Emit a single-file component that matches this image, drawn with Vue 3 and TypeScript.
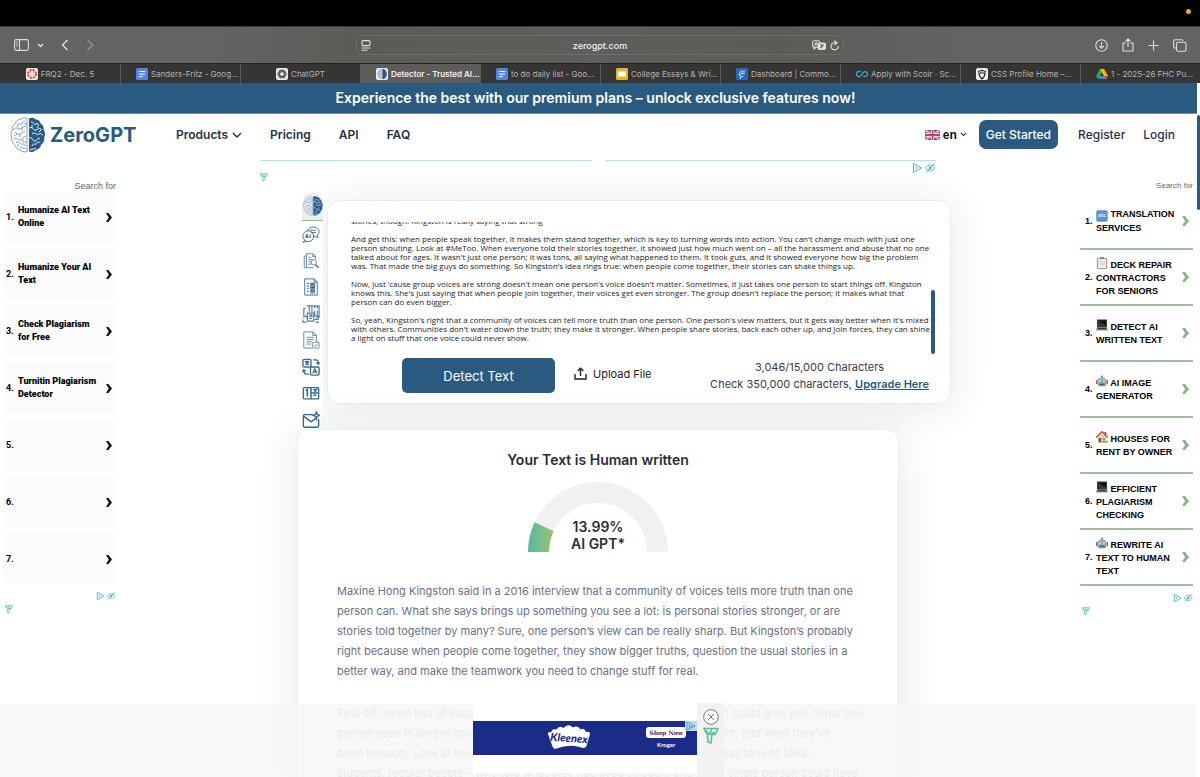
<script setup lang="ts">
import { onMounted, ref } from 'vue'

interface Tab { title: string; icon: string; cut?: boolean; active?: boolean }
const tabs: Tab[] = [
  { title: 'FRQ2 - Dec. 5', icon: 'canvas' },
  { title: 'Sanders-Fritz - Goog...', icon: 'docs', cut: true },
  { title: 'ChatGPT', icon: 'chatgpt' },
  { title: 'Detector - Trusted AI...', icon: 'zero', cut: true, active: true },
  { title: 'to do daily list - Goo...', icon: 'docs', cut: true },
  { title: 'College Essays & Wri...', icon: 'slides', cut: true },
  { title: 'Dashboard | Commo...', icon: 'common', cut: true },
  { title: 'Apply with Scoir · Sc...', icon: 'scoir', cut: true },
  { title: 'CSS Profile Home –...', icon: 'css', cut: true },
  { title: '1 - 2025-26 FHC Pu...', icon: 'drive', cut: true },
]

const leftAds: string[] = [
  'Humanize AI Text Online', 'Humanize Your AI Text', 'Check Plagiarism for Free',
  'Turnitin Plagiarism Detector', '', '', '',
]

const rightAds: { icon: string; text: string }[] = [
  { icon: 'abc', text: 'Translation Services' },
  { icon: 'clip', text: 'Deck Repair Contractors for Seniors' },
  { icon: 'laptop', text: 'Detect AI Written Text' },
  { icon: 'robot', text: 'AI Image Generator' },
  { icon: 'house', text: 'Houses for Rent by Owner' },
  { icon: 'laptop', text: 'Efficient Plagiarism Checking' },
  { icon: 'robot', text: 'Rewrite AI Text to Human Text' },
]

const tools: { icon: string; label: string }[] = [
  { icon: 'chat', label: 'AI chat' },
  { icon: 'plag', label: 'Plagiarism checker' },
  { icon: 'summary', label: 'Summarizer' },
  { icon: 'para', label: 'Paraphraser' },
  { icon: 'grammar', label: 'Grammar checker' },
  { icon: 'translate', label: 'Translator' },
  { icon: 'count', label: 'Word counter' },
  { icon: 'mail', label: 'Email helper' },
]

const essay = ref(`stories, though. Kingston is really saying that strong

And get this: when people speak together, it makes them stand together, which is key to turning words into action. You can't change much with just one
person shouting. Look at #MeToo. When everyone told their stories together, it showed just how much went on – all the harassment and abuse that no one
talked about for ages. It wasn't just one person; it was tons, all saying what happened to them. It took guts, and it showed everyone how big the problem
was. That made the big guys do something. So Kingston’s idea rings true: when people come together, their stories can shake things up.

Now, just ’cause group voices are strong doesn't mean one person's voice doesn't matter. Sometimes, it just takes one person to start things off. Kingston
knows this. She's just saying that when people join together, their voices get even stronger. The group doesn't replace the person; it makes what that
person can do even bigger.

So, yeah, Kingston's right that a community of voices can tell more truth than one person. One person's view matters, but it gets way better when it's mixed
with others. Communities don't water down the truth; they make it stronger. When people share stories, back each other up, and join forces, they can shine
a light on stuff that one voice could never show.`)

const box = ref<HTMLTextAreaElement | null>(null)
onMounted(() => {
  if (box.value) box.value.scrollTop = box.value.scrollHeight
})

const score = 13.99
const angle = Math.PI * (1 - score / 100)
const px = (r: number) => (70 + r * Math.cos(angle)).toFixed(2)
const py = (r: number) => (70 - r * Math.sin(angle)).toFixed(2)
const arc = `M0 70A70 70 0 0 1 ${px(70)} ${py(70)}L${px(49)} ${py(49)}A49 49 0 0 0 21 70Z`
</script>

<template>
  <svg class="defs" aria-hidden="true">
    <symbol id="i-brain" viewBox="0 0 36 36">
      <path d="M19 1.500c2-1.300 5-1 6.500.8 2.500.2 4.500 1.700 5 4 2.300 1.400 3.500 3.700 3.200 6.200 1.500 2.400 1.800 5.400.6 7.800.4 3-.8 5.700-3 7.300-.8 3-2.800 5-5.600 5.400-2 2.200-5 2.600-6.700 1.200z" fill="#255b86" />
      <path d="M21 5c3-1 2 4 5 2s3 2 1 4M19 11c4-2 4 3 7 2s3-3 6 0M22 17c3-3 4 2 7 0s3 2 4 1M19 21c4-2 3 4 6 3s2-4 5-2M22 29c1-4 4 0 5-3s3 1 3-1M20 33c3-2 4 0 6-2M22 8v3M29 15l2-2" fill="none" stroke="#fff" stroke-width=".9" />
      <path d="M17 1.500c-2-1.300-5-1-6.500.8-2.500.2-4.500 1.700-5 4-2.300 1.400-3.500 3.700-3.200 6.200-1.500 2.400-1.800 5.400-.6 7.800-.4 3 .8 5.700 3 7.300.8 3 2.800 5 5.600 5.400 2 2.200 5 2.600 6.700 1.200z" fill="none" stroke="#5d8bad" stroke-width=".8" />
      <path d="M15 4c-4 0-1 4-5 3s-3 2-2 4M16 10c-3-2-4 3-7 2s-3-2-6 1M15 15c-3-1-3 3-6 2s-3 2-5 2M16 20c-4-2-3 4-6 3s-3-3-6-1M15 29c-1-4-4 0-5-3s-3 1-4-1M16 32c-3-2-3 0-6-2M12 10v4M10 20v-3M13 25h3M14 7h3M5 15l2 2M13 22v3M8 27v3" fill="none" stroke="#5d8bad" stroke-width=".8" />
    </symbol>
    <symbol id="i-freestar" viewBox="0 0 16 18">
      <path d="M1 1.500h14l-2 4.500H9L8 16l-3-1-.5-7zM1 1.500l5.500 6H13M9 1.500L6.500 7.500" fill="none" stroke="#4fc795" stroke-width="1.600" stroke-linejoin="round" />
    </symbol>
    <symbol id="i-choice" viewBox="0 0 24 12">
      <path d="M1.500 1.500v9L9.500 6zM4 4.500v3" fill="none" stroke="#45b0d0" stroke-width="1" stroke-linejoin="round" />
      <path d="M13.500 6c3-4 7-4 9.500 0-2.500 4-6.500 4-9.500 0zM14 10.500L22.500 1.500" fill="none" stroke="#45b0d0" stroke-width=".9" />
      <circle cx="18.200" cy="6" r="1.500" fill="#45b0d0" />
    </symbol>
    <symbol id="t-canvas" viewBox="0 0 12 12">
      <rect width="12" height="12" rx="2" fill="#eee" />
      <circle cx="6" cy="6" r="4" fill="none" stroke="#df4a3d" stroke-width="2" stroke-dasharray="2.200 .94" />
      <circle cx="6" cy="6" r="2" fill="none" stroke="#df4a3d" stroke-width=".7" stroke-dasharray=".7 .87" />
    </symbol>
    <symbol id="t-docs" viewBox="0 0 12 12">
      <rect width="12" height="12" rx="1.500" fill="#5383ec" />
      <path d="M3 3.500h6M3 6h6M3 8.500h4" stroke="#fff" stroke-width="1.100" />
    </symbol>
    <symbol id="t-chatgpt" viewBox="0 0 12 12">
      <rect width="12" height="12" rx="2" fill="#e8e8e8" />
      <g fill="none" stroke="#333" stroke-width=".8">
        <ellipse cx="6" cy="6" rx="4.300" ry="2.300" />
        <ellipse cx="6" cy="6" rx="4.300" ry="2.300" transform="rotate(60 6 6)" />
        <ellipse cx="6" cy="6" rx="4.300" ry="2.300" transform="rotate(120 6 6)" />
      </g>
    </symbol>
    <symbol id="t-zero" viewBox="0 0 12 12">
      <rect width="12" height="12" rx="2" fill="#e9edf0" />
      <path d="M6.300.8c6 .2 6 10.200 0 10.400z" fill="#2a5a7f" />
      <path d="M5.700.8c-6 .2-6 10.200 0 10.400z" fill="#a9c0d0" />
    </symbol>
    <symbol id="t-slides" viewBox="0 0 12 12">
      <rect width="12" height="12" rx="1.500" fill="#e9b32f" />
      <rect x="2" y="3.500" width="8" height="5" fill="#fff" />
    </symbol>
    <symbol id="t-common" viewBox="0 0 12 12">
      <rect width="12" height="12" rx="1" fill="#2467bd" />
      <path d="M7 2.500C4 3 3 5 3.500 7S6 9.500 7.500 8M4 7l4-4M6 6l3-1M5 9l-1 2M8 3h1" fill="none" stroke="#cfe4fb" stroke-width="1" />
    </symbol>
    <symbol id="t-scoir" viewBox="0 0 12 12">
      <path d="M4.800 4.200C3 2.500.5 3.500.5 6s3 4 5 1.200L7 4.800C8.500 2.500 11.500 4 11.500 6S9 9.500 7.300 7.800" fill="none" stroke="#3fa2dc" stroke-width="1.300" />
    </symbol>
    <symbol id="t-css" viewBox="0 0 12 12">
      <rect width="12" height="12" rx="2" fill="#eee" />
      <path d="M2 4c2-2 6-2 8 0M3 5c0 3 1 4.500 3 6 2-1.500 3-3 3-6zM5 2l2 1" fill="none" stroke="#222" stroke-width="1.100" />
    </symbol>
    <symbol id="t-drive" viewBox="0 0 12 12">
      <path d="M4 1h4L4 8 2 11 0 8z" fill="#2da94f" />
      <path d="M4 1h4l4 7H8z" fill="#ffba00" />
      <path d="M2 11l2-3h8l-2 3z" fill="#4285f4" />
      <path d="M8 8h4l-2 3z" fill="#ea4335" />
    </symbol>
    <symbol id="e-clip" viewBox="0 0 12 12">
      <rect x=".8" y="1" width="10.400" height="11" rx="1" fill="#b79b7c" />
      <rect x="2" y="2" width="8" height="9" fill="#f1f1ee" />
      <rect x="4" width="4" height="2.200" fill="#8e8e8e" />
      <path d="M3 4.500h6M3 6.200h6M3 8h6" stroke="#c3c3c3" stroke-width=".6" />
    </symbol>
    <symbol id="e-laptop" viewBox="0 0 12 12">
      <rect x="1" y=".5" width="10" height="7.500" fill="#33383c" />
      <path d="M2 1.500h8v5z" fill="#111" />
      <path d="M1 8h10l1 3.500H0z" fill="#8d9093" />
      <path d="M2 8.800h8l.5 1.400h-9z" fill="#333" />
    </symbol>
    <symbol id="e-robot" viewBox="0 0 12 12">
      <circle cx="6" cy="1.500" r="1" fill="#d05545" />
      <path d="M1.500 6c0-5 9-5 9 0v4c0 2-9 2-9 0z" fill="#85aebf" />
      <rect y="5" width="1.500" height="4" fill="#d05545" />
      <rect x="10.500" y="5" width="1.500" height="4" fill="#d05545" />
      <circle cx="4" cy="6" r="1.200" fill="#fff" />
      <circle cx="8" cy="6" r="1.200" fill="#fff" />
      <circle cx="4" cy="6" r=".6" fill="#222" />
      <circle cx="8" cy="6" r=".6" fill="#222" />
      <rect x="3.500" y="8.700" width="5" height="1.400" fill="#465d67" />
    </symbol>
    <symbol id="e-house" viewBox="0 0 12 12">
      <rect x="8.500" y="1" width="1.800" height="4" fill="#a2493c" />
      <path d="M1.500 6L6 2l4.500 4v5.500h-9z" fill="#eccf9e" />
      <path d="M0 6.500L6 .8l6 5.700" fill="none" stroke="#b35544" stroke-width="1.500" />
      <rect x="2.700" y="7" width="2.400" height="4.500" fill="#8b5638" />
      <rect x="6.500" y="7" width="2.600" height="2.400" fill="#6ea6c9" />
      <path d="M6 11.500h6v-1.300H6z" fill="#6e9f48" />
    </symbol>
    <symbol id="s-chat" viewBox="0 0 20 20">
      <path d="M6 6.500c1.500-6 13-5.500 13 .7 0 2-.8 3.200-1.800 4.100l.8 2.700-3.300-1.300c-1 .2-1.700.2-2.500.1M8.500 5.800h7M10 8.300h5.500" />
      <circle cx="7" cy="12.500" r="6" /><path d="M3 17l-2 2.300 4-.9" />
      <path d="M4 14.500l1.500-4 1.500 4M4.500 13.200h2M9 10.500v4" stroke-width="1.200" />
    </symbol>
    <symbol id="s-plag" viewBox="0 0 20 20">
      <path d="M5 17.500H2.500v-13H5M5 2h7l3 3v3M5 2v15.500h8M12 2v3h3M7 6h3M7 8.500h5M7 11h3M7 13.500h3" />
      <circle cx="13" cy="11.500" r="3" /><path d="M15 14l3.500 3.500" stroke-width="1.800" />
    </symbol>
    <symbol id="s-summary" viewBox="0 0 20 20">
      <path d="M3 1h10.500L17 4.500V19H3zM13.500 1v3.500H17" />
      <path d="M5.500 6h2M5.500 9h2M5.500 12h2M5.500 15h2M9 6h5.500M9 7.500h5.500M9 9h5.500M9 10.500h5.500M9 12h5.500M9 13.500h5.500M9 15h5.500M9 16.700h5.500" stroke-width="1.200" />
    </symbol>
    <symbol id="s-para" viewBox="0 0 20 20">
      <path d="M2 12V4h2M5 1h14v11H9M8 1v7M11 1v7M14 1v3M17 1v3M6 9h7v9H6zM1 14l3-2 2 3M14 16h4v-3M16 14l2-2 1.500 2M14 6v5M17 6v5M8 11h3M8 13h3M8 15h3M1 16v3h4M15 19h4" stroke-width="1.300" />
    </symbol>
    <symbol id="s-grammar" viewBox="0 0 20 20">
      <path d="M2 19V1h10l4 4v7M12 1v4h4M2 19h9M5 7h8M5 9.500h8M5 12h6M5 14.500h5" />
      <rect x="11.500" y="12.500" width="7.500" height="6.500" rx="1" /><path d="M13.500 15.500l1.500 1.500 2.500-3" />
    </symbol>
    <symbol id="s-translate" viewBox="0 0 20 20">
      <rect x="1" y="1.500" width="9" height="8.500" rx="1.500" stroke-width="1.500" />
      <rect x="9.500" y="10" width="9.500" height="9" rx="1.500" stroke-width="1.500" />
      <path d="M3 4h5M5.500 3v1M4 7.800L7 4.500M4 4.500l3.500 3.300M12 17l2.300-5 2.200 5M13 15.500h2.700M12.500 2h3c1.500 0 2.500 1 2.500 4M16 5l2 2 1.500-2M8 18H5c-2 0-3-1-3-4M.5 15L2 13l2 2" stroke-width="1.400" />
    </symbol>
    <symbol id="s-count" viewBox="0 0 20 20">
      <rect x="1.500" y="4" width="17" height="12.500" rx="1" stroke-width="1.500" /><path d="M10 4v12.500M10 10h8.500M4 7.500L6 6v8M12.500 6.500h4M12.500 12.500h3.500M14 9l3-4" stroke-width="1.700" />
    </symbol>
    <symbol id="s-mail" viewBox="0 0 20 20">
      <path d="M12 4H3Q1.500 4 1.500 5.500v11Q1.500 18 3 18h14q1.500 0 1.500-1.500V9M2 6l8 6 5-3.500M16 1l.8 2.700L19.500 5l-2.700 1L16 9l-1-3-2.500-1L15 3.700z" stroke-width="1.500" />
    </symbol>
  </svg>

  <div class="screen">
    <div class="menubar"><i class="dot"></i></div>

    <header class="toolbar">
      <div class="tb-left">
        <button class="ib" aria-label="Sidebar"><svg width="15" height="12" viewBox="0 0 15 12"><rect x=".6" y=".6" width="13.800" height="10.800" rx="1.800" /><path d="M5.500 1v10M2.200 3h1.500M2.200 5h1.500M2.200 7h1.500" /></svg></button>
        <button class="ib drop" aria-label="Sidebar menu"><svg width="7" height="5" viewBox="0 0 7 5"><path d="M1 1l2.500 2.500L6 1" stroke-width="1.500" /></svg></button>
        <button class="ib" aria-label="Back"><svg width="8" height="12" viewBox="0 0 8 12"><path d="M6.500 1l-5 5 5 5" stroke-width="1.400" /></svg></button>
        <button class="ib dim" aria-label="Forward"><svg width="8" height="12" viewBox="0 0 8 12"><path d="M1.500 1l5 5-5 5" stroke-width="1.400" /></svg></button>
      </div>
      <div class="address">
        <svg width="10" height="11" viewBox="0 0 10 11"><rect x="1" y=".6" width="8" height="5" rx="1.200" /><path d="M.5 8h9M.5 10.300h6" /></svg>
        <span>zerogpt.com</span>
        <div class="addr-right">
          <svg width="14" height="11" viewBox="0 0 14 11"><rect x=".6" y=".8" width="7" height="6.500" rx="1.500" /><path d="M2.500 6l1.600-3.700L5.700 6M2 7v2l2-1.500" /><rect x="6" y="3" width="7.500" height="6.500" rx="1.500" fill="#ddd" /><path d="M8 5h3.500M8.500 8L11 5.500" stroke="#555" /></svg>
          <svg width="9" height="11" viewBox="0 0 9 11"><path d="M7 3.500A3.600 3.600 0 1 0 8.300 6M4.500.5L7 3 4.500 5" /></svg>
        </div>
      </div>
      <div class="tb-right">
        <button class="ib" aria-label="Downloads"><svg width="13" height="13" viewBox="0 0 13 13"><circle cx="6.500" cy="6.500" r="5.700" /><path d="M6.500 3v6M4 6.800l2.500 2.500L9 6.800" /></svg></button>
        <button class="ib" aria-label="Share"><svg width="12" height="14" viewBox="0 0 12 14"><path d="M4 5H1v8h10V5H8M6 9V1M3.500 3.300L6 .8l2.500 2.500" /></svg></button>
        <button class="ib" aria-label="New tab"><svg width="11" height="11" viewBox="0 0 11 11"><path d="M5.500.5v10M.5 5.500h10" /></svg></button>
        <button class="ib" aria-label="Tab overview"><svg width="14" height="13" viewBox="0 0 14 13"><path d="M3 9H2Q.7 9 .7 7.700V2Q.7.7 2 .7h7Q10 .7 10 2" /><rect x="3.500" y="3.300" width="9.500" height="9" rx="1.500" /></svg></button>
      </div>
    </header>

    <nav class="tabs" aria-label="Browser tabs">
      <a v-for="t in tabs" :key="t.title" href="#" :class="['tab', { cut: t.cut, active: t.active }]">
        <svg class="fav"><use :href="'#t-' + t.icon" /></svg><span>{{ t.title }}</span>
      </a>
    </nav>

    <div class="viewport">
      <div class="site">
        <div class="promo">Experience the best with our premium plans – unlock exclusive features now!</div>
        <nav class="nav" aria-label="Main">
          <a class="logo" href="#"><svg width="36" height="36"><use href="#i-brain" /></svg><span>ZeroGPT</span></a>
          <div class="menu">
            <a href="#">Products <svg width="10" height="6" viewBox="0 0 10 6"><path d="M1 1l4 4 4-4" fill="none" stroke="#1d3446" stroke-width="1.400" /></svg></a>
            <a href="#">Pricing</a><a href="#">API</a><a href="#">FAQ</a>
          </div>
          <div class="account">
            <button class="lang">
              <svg width="15" height="10" viewBox="0 0 15 10"><path fill="#34499a" d="M0 0h15v10H0z" /><path d="M0 0l15 10M15 0L0 10" stroke="#fff" stroke-width="2" /><path d="M0 0l15 10M15 0L0 10" stroke="#d33b4c" stroke-width=".8" /><path d="M7.500 0v10M0 5h15" stroke="#fff" stroke-width="3.400" /><path d="M7.500 0v10M0 5h15" stroke="#d8394a" stroke-width="1.800" /></svg>
              en
              <svg width="7" height="5" viewBox="0 0 7 5"><path d="M.8.8l2.700 2.700L6.200.8" fill="none" stroke="#333" stroke-width="1.100" /></svg>
            </button>
            <a class="start" href="#">Get Started</a>
            <a class="plain" href="#">Register</a>
            <a class="plain" href="#">Login</a>
          </div>
        </nav>

        <div class="cols">
          <aside class="left">
            <p class="search">Search for</p>
            <ol>
              <li v-for="(a, i) in leftAds" :key="i">
                <a href="#"><b class="num">{{ i + 1 }}.</b><span>{{ a }}</span>
                  <svg width="6" height="9" viewBox="0 0 6 9"><path d="M0 0h2.400L6 4.500 2.400 9H0l2.800-4.500z" fill="#111" /></svg></a>
              </li>
            </ol>
            <svg class="choice"><use href="#i-choice" /></svg>
            <svg class="star"><use href="#i-freestar" /></svg>
          </aside>

          <main>
            <div class="adrow"><i></i><i></i></div>
            <div class="admarks">
              <svg class="star"><use href="#i-freestar" /></svg>
              <svg class="choice"><use href="#i-choice" /></svg>
            </div>

            <section class="editor">
              <div class="tools">
                <button class="tool on" aria-label="AI detector"><svg width="20" height="20"><use href="#i-brain" /></svg></button>
                <button v-for="t in tools" :key="t.icon" :class="['tool', t.icon]" :aria-label="t.label"><svg width="18" height="18"><use :href="'#s-' + t.icon" /></svg></button>
              </div>
              <div class="card">
                <div class="field">
                  <textarea ref="box" v-model="essay" aria-label="Text to check" wrap="off" spellcheck="false"></textarea>
                  <i class="thumb"></i>
                </div>
                <div class="actions">
                  <button class="detect">Detect Text</button>
                  <button class="upload"><svg width="13" height="13" viewBox="0 0 13 13"><path d="M1 7v5h11V7M6.500 9V1.200M3.700 4l2.800-2.800L9.300 4" fill="none" stroke="#222" stroke-width="1.400" /></svg>Upload File</button>
                  <p class="quota">3,046/15,000 Characters<br />Check 350,000 characters, <a href="#">Upgrade Here</a></p>
                </div>
              </div>
            </section>

            <section class="result">
              <h2>Your Text is Human written</h2>
              <div class="gauge">
                <svg viewBox="0 0 140 70" width="140" height="70">
                  <defs><linearGradient id="g" x1="0" x2="1"><stop offset="0" stop-color="#56b89c" /><stop offset="1" stop-color="#9cc272" /></linearGradient></defs>
                  <path d="M0 70A70 70 0 0 1 140 70H119A49 49 0 0 0 21 70Z" fill="#f1f1f1" />
                  <path :d="arc" fill="url(#g)" />
                </svg>
                <div class="score">{{ score }}%<br />AI GPT*</div>
              </div>
              <p>Maxine Hong Kingston said in a 2016 interview that a community of voices tells more truth than one<br />person can. What she says brings up something you see a lot: is personal stories stronger, or are<br />stories told together by many? Sure, one person’s view can be really sharp. But Kingston’s probably<br />right because when people come together, they show bigger truths, question the usual stories in a<br />better way, and make the teamwork you need to change stuff for real.</p>
              <p>First off, when lots of voices speak, you get a fuller picture than one person could give you. What one<br />person sees is always going to be shaped by the place they are coming from, and what they’ve<br />been through. Look at the Civil Rights Movement. It was not one leader, it was tons of folks –<br />students, regular people – who told what they had lived through, and so no single person could have</p>
            </section>
          </main>

          <aside class="right">
            <p class="search">Search for</p>
            <ol>
              <li v-for="(a, i) in rightAds" :key="i">
                <a href="#"><b class="num">{{ i + 1 }}.</b>
                  <span><i v-if="a.icon === 'abc'" class="abc">abc</i><svg v-else class="emoji"><use :href="'#e-' + a.icon" /></svg> {{ a.text }}</span>
                  <svg width="7" height="10" viewBox="0 0 7 10"><path d="M0 0h3l4 5-4 5H0l3-5z" fill="#89b586" /></svg></a>
              </li>
            </ol>
            <svg class="choice"><use href="#i-choice" /></svg>
            <svg class="star"><use href="#i-freestar" /></svg>
          </aside>
        </div>

        <div class="dock">
          <div class="slot">
            <div class="kleenex">
              <svg class="brand" width="44" height="26" viewBox="0 0 44 26"><path d="M1 9Q1 6 4 7.500 5 3 9.500 4.500 12 0 16.500 3 21-2 26 2.500 31 0 33.500 4.500 37 2 39 7q4-1 4 2l-3.500 12q-2 3-5 1.500-12-4-25 1Q7 25 5.500 21.500z" fill="#fff" /><text x="22" y="17" text-anchor="middle" font-family="Lato, sans-serif" font-size="11" font-weight="900" font-style="italic" fill="#1b2b8a" transform="rotate(4 22 14)">Kleenex</text></svg>
              <div class="cta"><a href="#">Shop Now</a><span>Kroger</span></div>
              <svg class="info" viewBox="0 0 12 10"><path d="M2 1v8l8-4zM4.500 3.500v3l3-1.500" fill="none" stroke="#3aa6cf" /></svg>
            </div>
          </div>
          <div class="closer">
            <button aria-label="Close ad"><svg width="16" height="16" viewBox="0 0 16 16"><circle cx="8" cy="8" r="7.300" fill="#fff" stroke="#777" /><path d="M5 5l6 6M11 5l-6 6" stroke="#777" /></svg></button>
            <svg width="16" height="18"><use href="#i-freestar" /></svg>
          </div>
        </div>
      </div>
      <div class="gutter"><i></i></div>
    </div>
  </div>
</template>

<style>
html, body { margin: 0; background: #fff; }
</style>

<style scoped>
* { box-sizing: border-box; }
button { border: 0; background: none; padding: 0; font: inherit; color: inherit; }
a { color: inherit; text-decoration: none; }
p, h2, ol { margin: 0; padding: 0; }
ol { list-style: none; }
svg { display: block; flex: none; }
.defs { position: absolute; width: 0; height: 0; }
.screen { height: 100vh; overflow: hidden; display: flex; flex-direction: column; font-family: Inter, "Liberation Sans", sans-serif; }

.menubar { height: 26px; background: #000; display: flex; align-items: center; justify-content: flex-end; padding-right: 9px; flex: none; }
.dot { width: 5px; height: 5px; border-radius: 50%; background: #f1a33c; margin-top: -3px; }
.toolbar { height: 37px; flex: none; border-top: 1px solid #3a3a3a; background: linear-gradient(90deg, #636363, #636363 18%, #5c5b57 30%, #5e5e5c 50%, #5c5b57 65%, #636363 80%); display: grid; grid-template-columns: 1fr 488px 1fr; align-items: center; }
.toolbar svg { fill: none; stroke: #dcdcdc; stroke-width: 1.100; }
.tb-left { display: flex; align-items: center; gap: 17px; padding-left: 14px; }
.drop { margin: 0 0 0 -9px; }
.dim { opacity: .4; }
.tb-right { display: flex; align-items: center; justify-content: flex-end; gap: 14px; padding-right: 13px; }
.address { height: 20px; border: 1px solid #6e6d69; border-radius: 7px; display: grid; grid-template-columns: 1fr auto 1fr; align-items: center; padding: 0 4px; font-size: 9px; font-weight: 500; color: #f0f0f0; }
.addr-right { display: flex; gap: 4px; justify-content: flex-end; }
.tabs { height: 20px; flex: none; display: flex; background: #353534; border-top: 1px solid #232323; }
.tab { flex: 0 0 10%; min-width: 0; display: flex; align-items: center; justify-content: center; gap: 3px; font-size: 8px; color: #b4b4b4; border-left: 1px solid #5b5b5b; white-space: nowrap; overflow: hidden; }
.tab:first-child { border-left: 0; }
.tab.cut { justify-content: flex-start; padding-left: 15px; }
.tab.active { background: #5d5c59; color: #f2f2f2; font-weight: 600; }
.fav { width: 12px; height: 12px; }

.viewport { flex: 1; min-height: 0; display: flex; }
.site { flex: 1; min-width: 0; overflow: hidden; position: relative; }
.gutter { width: 3px; background: #fff; padding-top: 32px; }
.gutter i { display: block; height: 95px; background: #2a5a7f; border-radius: 2px; }
.promo { height: 31px; line-height: 30px; background: #2a5a7f; color: #fff; text-align: center; font-size: 14px; font-weight: 600; border-bottom: 1px solid #6d8fa9; padding-right: 6px; }
.nav { height: 43px; display: flex; align-items: center; padding: 0 22px 2px 10px; font-size: 12px; font-weight: 600; color: #1d3446; }
.logo { display: flex; align-items: center; gap: 4px; font-size: 20px; font-weight: 700; color: #2a5a7f; width: 166px; }
.menu { display: flex; gap: 28px; }
.menu a { display: flex; align-items: center; gap: 4px; }
.account { margin-left: auto; display: flex; align-items: center; }
.lang { display: flex; align-items: center; gap: 3px; font: 700 12px "Liberation Sans", Arial, sans-serif; color: #111; margin-right: 12px; }
.start { height: 29px; line-height: 29px; padding: 0 7px; border-radius: 7px; background: #2a5a7f; color: #fff; font-weight: 500; margin-right: 20px; }
.plain { font-weight: 500; }
.plain + .plain { margin-left: 18px; }

.cols { display: grid; grid-template-columns: 116px minmax(0, 1fr) 117px; align-items: start; }
.search { color: #666; text-align: right; font-family: "Liberation Sans", Arial, sans-serif; line-height: 12px; }
.left { padding: 23px 0 0 4px; }
.left .search { font-size: 9px; }
.left ol { display: grid; gap: 7px; }
.left li a { height: 50px; background: #fbfbfb; display: flex; align-items: center; padding: 0 4px 0 2px; font: 900 9px/13px Roboto, sans-serif; color: #000; }
.left .num { width: 12px; font-size: 9px; font-weight: 700; }
.left li span, .right li span { flex: 1; }
.left li span { padding-right: 6px; }
.choice { width: 20px; height: 10px; margin: 7px 0 0 auto; }
.star { width: 8px; height: 9px; }
.left .star { margin: 4px 0 0 1px; }
.right { padding: 23px 4px 0 0; }
.right .search { font-size: 8px; }
.right ol { margin-top: 2px; }
.right li a { height: 56px; padding: 0 4px 0 5px; display: flex; align-items: center; border-bottom: 2px solid #9dbf99; font: 700 9px/13px "Liberation Sans", Arial, sans-serif; color: #000; text-transform: uppercase; }
.right .num { width: 11px; font-size: 9px; }
.emoji { display: inline-block; width: 12px; height: 12px; vertical-align: -1px; }
.abc { display: inline-block; width: 12px; height: 12px; border-radius: 2px; background: #5e92c6; border: 1px solid #8ab0d6; color: #fff; font: 400 5px/9px "Liberation Sans", Arial, sans-serif; text-align: center; text-transform: none; vertical-align: 0; }
.right .star { margin: 4px 0 0 2px; }

main { width: 100%; max-width: 676px; margin: 0 auto; }
.adrow { display: flex; gap: 13px; padding-top: 3px; }
.adrow i { flex: 1; height: 1px; background: #9becf6; }
.admarks { display: flex; justify-content: space-between; height: 32px; align-items: flex-start; }
.admarks .choice { width: 24px; height: 12px; margin: 1px 0 0; }
.admarks .star { margin-top: 12px; }
.editor { display: flex; align-items: flex-start; gap: 4px; margin: 0 -15px 0 42px; }
.tools { width: 21px; height: 240px; margin-bottom: -4px; background: #fff; border-radius: 11px 11px 0 0; overflow: hidden; display: flex; flex-direction: column; position: relative; z-index: 1; }
.tool { flex: 1 1 0; display: flex; align-items: center; }
.tool svg { fill: none; stroke: #3a6a90; stroke-width: 1; }
.tool.plag, .tool.para, .tool.grammar { opacity: .85; }
.tool.on { background: #ededed; border-bottom: 1px solid #7fc878; flex: 0 0 28px; justify-content: center; padding-bottom: 2px; }
.card { flex: 1; min-width: 0; height: 204px; margin-top: 7px; background: #fff; border: 1px solid #eaeaf4; border-radius: 12px; box-shadow: 0 4px 40px rgba(30, 35, 70, .11); padding: 21px 15px 0 23px; }
.field { display: flex; height: 132px; align-items: flex-end; }
textarea { flex: 1; min-width: 0; height: 132px; border: 0; outline: 0; resize: none; padding: 0 0 12px; background: none; overflow: hidden; font: 8px/9px "Open Sans", "Liberation Sans", sans-serif; color: #1c1c1c; white-space: pre; }
.thumb { width: 4px; height: 64px; border-radius: 2px; background: #2a5a7f; }
.actions { display: flex; align-items: center; padding: 4px 6px 0 51px; color: #222; }
.detect { width: 153px; height: 35px; border-radius: 5px; background: #2a5a7f; color: #fff; font-size: 13px; }
.upload { display: flex; align-items: center; gap: 6px; margin: 0 0 4px 19px; font-size: 11px; }
.quota { margin-left: auto; text-align: center; font-size: 11px; line-height: 17px; color: #3c3c46; }
.quota a { color: #2a5a7f; font-weight: 600; text-decoration: underline; }
.result { margin: 0 37px; background: #fff; border: 1px solid #ededf4; border-radius: 12px 12px 0 0; box-shadow: 0 4px 40px rgba(30, 35, 70, .11); padding: 21px 0 0 39px; position: relative; z-index: 2; }
.result h2 { font-size: 14px; line-height: 18px; font-weight: 600; color: #2c2c38; text-align: center; margin-left: -39px; }
.gauge { margin: 13px 0 29px -39px; display: grid; justify-content: center; color: #2c2c38; }
.gauge > * { grid-area: 1 / 1; }
.score { align-self: end; text-align: center; font-size: 14px; line-height: 17px; font-weight: 600; }
.result p { font-size: 11px; line-height: 20px; color: #6b6f87; white-space: nowrap; margin-bottom: 22px; }

.dock { position: absolute; left: 0; right: 0; bottom: 0; height: 74px; z-index: 5; display: flex; justify-content: center; background: linear-gradient(transparent 1px, rgba(247, 247, 247, .9) 1px); }
.slot { width: 224px; height: 70px; background: #fff; padding-top: 18px; }
.kleenex { height: 34px; background: #1b2b8a; display: grid; grid-template-columns: 74px 44px 1fr; position: relative; align-items: center; }
.brand { grid-column: 2; }
.cta { justify-self: end; margin-right: 11px; display: grid; justify-items: center; gap: 3px; font: 700 6px/11px "DejaVu Serif", serif; color: #fff; }
.cta a { background: #fff; color: #1b2b8a; border-radius: 3px; padding: 0 3px; }
.cta span { font: 700 6px/8px Lato, sans-serif; }
.info { position: absolute; right: 0; top: 0; width: 12px; height: 10px; background: #c5d2ea; }
.closer { width: 27px; background: #f4f1f2; display: flex; flex-direction: column; align-items: center; gap: 2px; padding-top: 6px; }
</style>
